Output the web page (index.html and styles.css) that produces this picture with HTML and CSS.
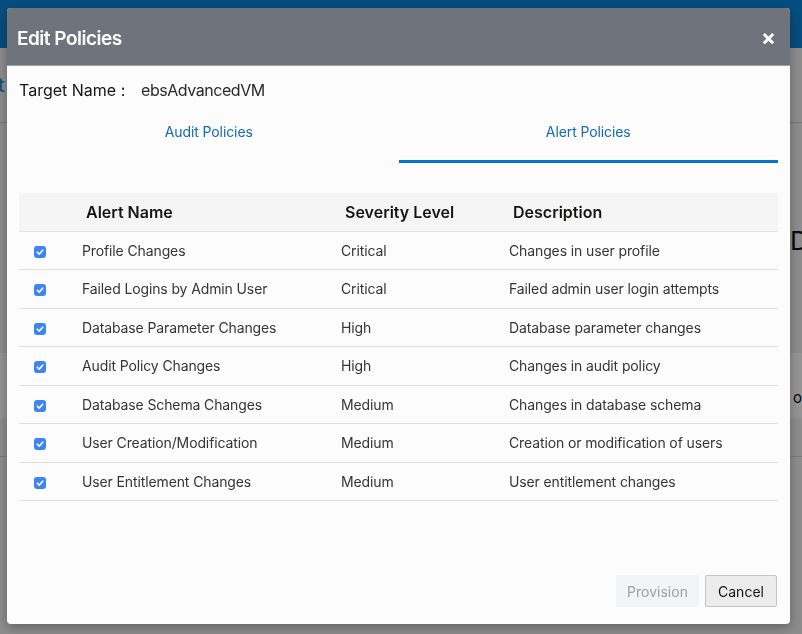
FILE: index.html
```html
<!DOCTYPE html>
<html>
<head>
<meta charset="utf-8">
<link rel="stylesheet" href="styles.css">
</head>
<body>
<div class="page">
  <div class="topbar"></div>
  <div class="page-body">
    <div class="page-title"><span class="crumb">t</span></div>
    <div class="page-rule"></div>
    <div class="page-big">Da</div>
    <div class="page-band"><span>olic</span></div>
    <div class="page-rule2"></div>
  </div>
</div>
<div class="overlay"></div>
<div class="dialog">
  <div class="dlg-header">
    <h1 class="dlg-title">Edit Policies</h1>
    <span class="dlg-close">×</span>
  </div>
  <div class="dlg-body">
    <div class="target"><span class="target-label">Target Name :</span><span class="target-value">ebsAdvancedVM</span></div>
    <div class="tabs">
      <div class="tab">Audit Policies</div>
      <div class="tab active">Alert Policies</div>
    </div>
    <table class="grid">
      <colgroup><col class="c1"><col class="c2"><col class="c3"><col class="c4"></colgroup>
      <thead>
        <tr><th></th><th>Alert Name</th><th>Severity Level</th><th>Description</th></tr>
      </thead>
      <tbody>
        <tr><td><span class="cb"><svg viewBox="0 0 12 12" width="12" height="12"><path d="M3.3 6.2 L5.2 8.1 L8.7 4.2" fill="none" stroke="#fff" stroke-width="1.6" stroke-linecap="round" stroke-linejoin="round"/></svg></span></td><td>Profile Changes</td><td>Critical</td><td>Changes in user profile</td></tr>
        <tr><td><span class="cb"><svg viewBox="0 0 12 12" width="12" height="12"><path d="M3.3 6.2 L5.2 8.1 L8.7 4.2" fill="none" stroke="#fff" stroke-width="1.6" stroke-linecap="round" stroke-linejoin="round"/></svg></span></td><td>Failed Logins by Admin User</td><td>Critical</td><td>Failed admin user login attempts</td></tr>
        <tr><td><span class="cb"><svg viewBox="0 0 12 12" width="12" height="12"><path d="M3.3 6.2 L5.2 8.1 L8.7 4.2" fill="none" stroke="#fff" stroke-width="1.6" stroke-linecap="round" stroke-linejoin="round"/></svg></span></td><td>Database Parameter Changes</td><td>High</td><td>Database parameter changes</td></tr>
        <tr><td><span class="cb"><svg viewBox="0 0 12 12" width="12" height="12"><path d="M3.3 6.2 L5.2 8.1 L8.7 4.2" fill="none" stroke="#fff" stroke-width="1.6" stroke-linecap="round" stroke-linejoin="round"/></svg></span></td><td>Audit Policy Changes</td><td>High</td><td>Changes in audit policy</td></tr>
        <tr><td><span class="cb"><svg viewBox="0 0 12 12" width="12" height="12"><path d="M3.3 6.2 L5.2 8.1 L8.7 4.2" fill="none" stroke="#fff" stroke-width="1.6" stroke-linecap="round" stroke-linejoin="round"/></svg></span></td><td>Database Schema Changes</td><td>Medium</td><td>Changes in database schema</td></tr>
        <tr><td><span class="cb"><svg viewBox="0 0 12 12" width="12" height="12"><path d="M3.3 6.2 L5.2 8.1 L8.7 4.2" fill="none" stroke="#fff" stroke-width="1.6" stroke-linecap="round" stroke-linejoin="round"/></svg></span></td><td>User Creation/Modification</td><td>Medium</td><td>Creation or modification of users</td></tr>
        <tr><td><span class="cb"><svg viewBox="0 0 12 12" width="12" height="12"><path d="M3.3 6.2 L5.2 8.1 L8.7 4.2" fill="none" stroke="#fff" stroke-width="1.6" stroke-linecap="round" stroke-linejoin="round"/></svg></span></td><td>User Entitlement Changes</td><td>Medium</td><td>User entitlement changes</td></tr>
      </tbody>
    </table>
  </div>
  <div class="dlg-footer">
    <button class="btn btn-disabled">Provision</button>
    <button class="btn btn-cancel">Cancel</button>
  </div>
</div>
</body>
</html>
```
FILE: styles.css
```css
* { box-sizing: border-box; }
html, body { margin: 0; padding: 0; }
body {
  width: 802px;
  height: 634px;
  overflow: hidden;
  font-family: Inter, "Noto Sans", "Liberation Sans", sans-serif;
  background: #f2f2f2;
}
.page { width: 802px; height: 634px; }
.topbar { height: 48px; background: #0a86da; }
.page-body { height: 586px; }
.page-title { height: 74px; display: flex; align-items: center; }
.crumb { font-size: 20px; color: #1c7fd0; margin-left: -2px; }
.page-rule { height: 1px; background: #c8c8c8; }
.page-big { font-size: 26px; color: #111; padding: 103px 0 0 790px; line-height: 30px; }
.page-band { margin-top: 97px; height: 65px; background: #ffffff; display: flex; align-items: flex-end; padding: 0 0 11px 793px; font-size: 15px; color: #111; }
.page-rule2 { margin-top: 38px; height: 1px; background: #d0d0d0; }

.overlay {
  position: fixed;
  inset: 0;
  background: rgba(0, 0, 0, 0.42);
}

.dialog {
  position: fixed;
  left: 7px;
  top: 8px;
  width: 783px;
  height: 616px;
  background: #fcfcfc;
  border-radius: 4px;
  overflow: hidden;
  box-shadow: 0 4px 12px rgba(0,0,0,0.3);
  display: flex;
  flex-direction: column;
}
.dlg-header {
  height: 58px;
  background: #6f737b;
  border-bottom: 1px solid #9aa0a8;
  display: flex;
  align-items: center;
  justify-content: space-between;
  padding: 3px 14px 0 10px;
}
.dlg-title {
  margin: 0;
  font-size: 19px;
  font-weight: 600;
  color: #ffffff;
  letter-spacing: -0.5px;
}
.dlg-close {
  color: #fff;
  font-size: 22px;
  font-weight: 700;
  line-height: 1;
  margin-top: -2px;
}
.dlg-body {
  flex: 1;
  padding: 0 12px;
}
.target {
  height: 47px;
  display: flex;
  align-items: center;
  padding-top: 1px;
  font-size: 16px;
  color: #161513;
}
.target-label { width: 122px; }
.target-value { color: #2a2a2a; letter-spacing: -0.45px; }
.tabs {
  display: flex;
  height: 50px;
}
.tab {
  flex: 1;
  display: flex;
  align-items: flex-start;
  justify-content: center;
  padding-top: 10px;
  font-size: 14px;
  color: #0f6cb5;
  letter-spacing: -0.1px;
  border-bottom: 3px solid transparent;
}
.tab.active { border-bottom-color: #0572ce; }
.grid {
  margin-top: 30px;
  width: 759px;
  border-collapse: collapse;
  table-layout: fixed;
}
.c1 { width: 51px; }
.c2 { width: 259px; }
.c3 { width: 168px; }
.c4 { width: 281px; }
.grid th {
  background: #f5f5f5;
  height: 38px;
  text-align: left;
  font-size: 16px;
  font-weight: 600;
  color: #161513;
  padding: 1px 0 0 16px;
  border-bottom: 1px solid #e2e2e2;
}
.grid td {
  height: 38.5px;
  font-size: 14px;
  color: #353535;
  padding: 0 0 0 12px;
  letter-spacing: -0.12px;
  border-bottom: 1px solid #dedede;
  white-space: nowrap;
}
.grid td:first-child { padding-left: 15px; }
.cb {
  display: inline-flex;
  width: 12px;
  height: 12px;
  border-radius: 3px;
  background: #3d84f5;
  vertical-align: middle;
}
.dlg-footer {
  display: flex;
  justify-content: flex-end;
  gap: 6px;
  padding: 0 13px 17px 0;
}
.btn {
  height: 32px;
  font-family: inherit;
  font-size: 14px;
  border-radius: 2px;
  padding: 0;
}
.btn-disabled {
  width: 83px;
  background: #f3f4f5;
  border: 1px solid #f3f4f5;
  color: #a0a0a0;
}
.btn-cancel {
  width: 72px;
  background: #ececec;
  border: 1px solid #c4c4c4;
  color: #161513;
}
```
